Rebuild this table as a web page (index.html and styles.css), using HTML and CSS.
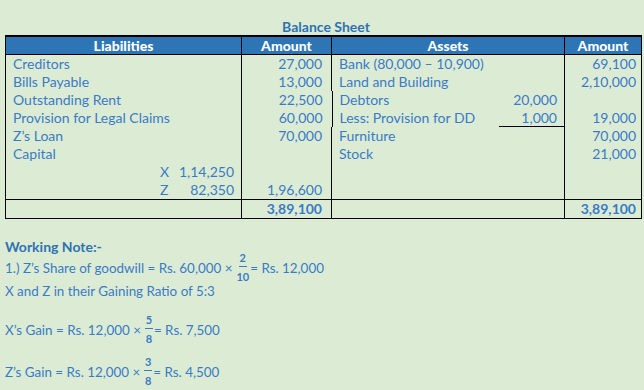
FILE: index.html
```html
<!DOCTYPE html>
<html>
<head>
<meta charset="utf-8">
<link rel="stylesheet" href="styles.css">
</head>
<body>
<div class="page">
  <div class="title">Balance Sheet</div>
  <table class="bs">
    <colgroup>
      <col class="c1"><col class="c2"><col class="c3"><col class="c4">
    </colgroup>
    <thead>
      <tr><th>Liabilities</th><th>Amount</th><th>Assets</th><th>Amount</th></tr>
    </thead>
    <tbody>
      <tr><td>Creditors</td><td class="num">27,000</td><td>Bank (80,000 – 10,900)</td><td class="num r">69,100</td></tr>
      <tr><td>Bills Payable</td><td class="num">13,000</td><td>Land and Building</td><td class="num r">2,10,000</td></tr>
      <tr><td>Outstanding Rent</td><td class="num">22,500</td><td class="split"><span class="lbl">Debtors</span><span class="sub">20,000</span></td><td class="num r"></td></tr>
      <tr><td>Provision for Legal Claims</td><td class="num">60,000</td><td class="split"><span class="lbl">Less: Provision for DD</span><span class="sub ul">1,000</span></td><td class="num r">19,000</td></tr>
      <tr><td>Z’s Loan</td><td class="num">70,000</td><td>Furniture</td><td class="num r">70,000</td></tr>
      <tr><td>Capital</td><td class="num"></td><td>Stock</td><td class="num r">21,000</td></tr>
      <tr><td class="cap"><span class="who">X</span><span class="amt">1,14,250</span></td><td class="num"></td><td></td><td class="num r"></td></tr>
      <tr><td class="cap"><span class="who">Z</span><span class="amt">82,350</span></td><td class="num">1,96,600</td><td></td><td class="num r"></td></tr>
    </tbody>
    <tfoot>
      <tr><td></td><td class="num b">3,89,100</td><td></td><td class="num r b">3,89,100</td></tr>
    </tfoot>
  </table>

  <div class="notes">
    <div class="wn">Working Note:-</div>
    <div class="ln l1">1.) Z’s Share of goodwill = Rs. 60,000 ×<span class="frac"><span>2</span><span class="bar"></span><span>10</span></span>= Rs. 12,000</div>
    <div class="ln l2">X and Z in their Gaining Ratio of 5:3</div>
    <div class="ln l3">X’s Gain = Rs. 12,000 ×<span class="frac"><span>5</span><span class="bar"></span><span>8</span></span>= Rs. 7,500</div>
    <div class="ln l4">Z’s Gain = Rs. 12,000 ×<span class="frac"><span>3</span><span class="bar"></span><span>8</span></span>= Rs. 4,500</div>
  </div>
</div>
</body>
</html>
```

FILE: styles.css
```css
html, body {
  margin: 0;
  padding: 0;
  background: #dcebd4;
}
body {
  font-family: Lato, "Liberation Sans", sans-serif;
  font-size: 14px;
  color: #3a7bc6;
}
.page {
  width: 644px;
  height: 390px;
  overflow: hidden;
}
.title {
  padding-top: 19px;
  height: 16px;
  line-height: 16px;
  text-align: center;
  font-weight: bold;
  color: #2e72b3;
  padding-left: 8px;
}
.bs {
  margin-left: 5px;
  width: 636px;
  border-collapse: collapse;
  table-layout: fixed;
  border: 1px solid #000;
  border-top: 2px solid #000;
}
.c1 { width: 236px; }
.c2 { width: 90px; }
.c3 { width: 233px; }
.c4 { width: 77px; }
.bs th {
  background: #2e75b6;
  color: #fff;
  font-weight: 900;
  height: 17px;
  line-height: 17px;
  padding: 0;
  border-left: 1px solid #000;
  border-bottom: 1px solid #000;
}
.bs td {
  height: 18px;
  line-height: 18px;
  padding: 0 7px;
  border-left: 1px solid #000;
  white-space: nowrap;
}
.bs td.num {
  text-align: right;
  padding-right: 9px;
}
.bs td.num.r {
  padding-right: 5px;
}
.bs td.b {
  font-weight: bold;
}
.bs tfoot td {
  border-top: 1px solid #000;
}
.bs td.split {
  padding-right: 0;
}
.split {
  display: flex;
}
.split .lbl {
  flex: 1;
}
.split .sub {
  width: 58px;
  padding-right: 7px;
  text-align: right;
  box-sizing: content-box;
  height: 18px;
}
.split .sub.ul {
  box-sizing: border-box;
  width: 65px;
  border-bottom: 1px solid #000;
  line-height: 18px;
}
.bs td.cap {
  text-align: right;
}
.cap .who {
  display: inline-block;
  width: 12px;
  text-align: left;
}
.cap .amt {
  display: inline-block;
  width: 62px;
  text-align: right;
}
.notes {
  padding-left: 5px;
  margin-top: 20px;
}
.wn {
  font-weight: bold;
  color: #2e72b3;
  height: 16px;
  line-height: 16px;
}
.ln {
  display: flex;
  align-items: center;
  white-space: pre;
  font-size: 13.4px;
}
.l1 { height: 26px; }
.l2 { height: 18px; margin-top: 1px; }
.l3 { height: 28px; margin-top: 16px; }
.l4 { height: 28px; margin-top: 14px; }
.frac {
  display: inline-flex;
  flex-direction: column;
  align-items: center;
  font-size: 11px;
  font-weight: bold;
  line-height: 9px;
  margin: -3px 1px 0 4px;
}
.frac .bar {
  display: block;
  width: 8px;
  height: 1px;
  background: #3a7bc6;
  margin: 4px 0 5px;
}
```
